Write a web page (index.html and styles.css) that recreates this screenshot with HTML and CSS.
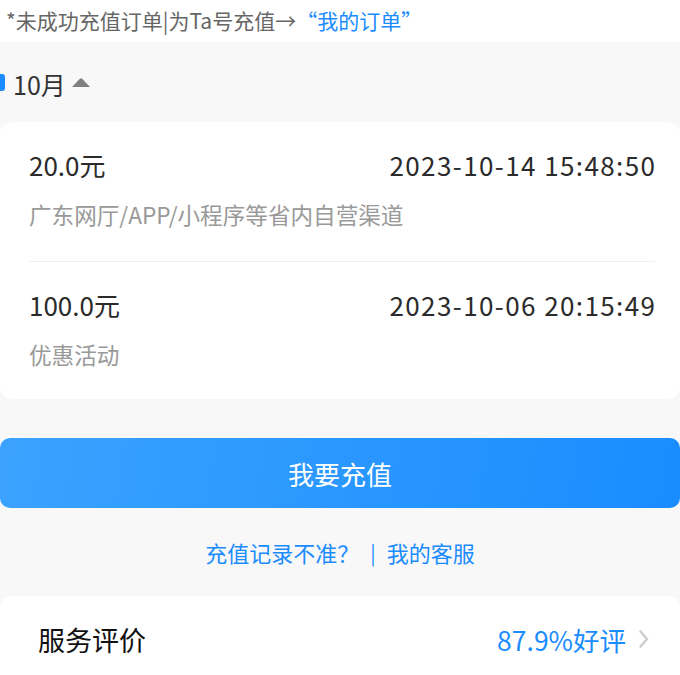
FILE: index.html
```html
<!DOCTYPE html>
<html lang="zh-CN">
<head>
<meta charset="utf-8">
<title>充值记录</title>
<link rel="stylesheet" href="styles.css">
</head>
<body>
<div class="notice">*未成功充值订单|为Ta号充值→<span class="link">“我的订单”</span></div>
<main class="page">
  <div class="month">
    <span class="month-mark"></span>
    <span class="month-label">10月</span>
    <svg class="month-caret" width="20" height="11" viewBox="0 0 20 11"><path d="M1 10 L8.6 2 Q10 0.6 11.4 2 L19 10 Z" fill="#7f7f7f"/></svg>
  </div>
  <section class="card records">
    <div class="record">
      <div class="record-top"><span class="amount">20.0元</span><span class="time">2023-10-14 15:48:50</span></div>
      <div class="channel">广东网厅/APP/小程序等省内自营渠道</div>
    </div>
    <div class="record">
      <div class="record-top"><span class="amount">100.0元</span><span class="time">2023-10-06 20:15:49</span></div>
      <div class="channel">优惠活动</div>
    </div>
  </section>
  <button class="recharge">我要充值</button>
  <div class="help"><span>充值记录不准？</span><span class="sep">|</span><span>我的客服</span></div>
  <section class="card rating">
    <span class="rating-title">服务评价</span>
    <span class="rating-value">87.9%好评
      <svg class="chev" width="12" height="20" viewBox="0 0 12 20"><path d="M2.5 2.5 L9 10 L2.5 17.5" fill="none" stroke="#cfcfcf" stroke-width="2.6" stroke-linecap="round" stroke-linejoin="round"/></svg>
    </span>
  </section>
</main>
</body>
</html>
```
FILE: styles.css
```css
html, body {
  margin: 0;
  padding: 0;
  background: #f8f8f8;
  font-family: "Noto Sans CJK SC", "Noto Sans", sans-serif;
}

.notice {
  background: #fff;
  height: 42px;
  line-height: 40px;
  padding-left: 6px;
  font-size: 21px;
  color: #666;
  white-space: nowrap;
}
.notice .link { color: #1a8cff; }

.page {
  display: flex;
  flex-direction: column;
}

.month {
  height: 80px;
  display: flex;
  align-items: center;
  gap: 7px;
}
.month-mark {
  width: 5px;
  height: 17px;
  background: #1a8cff;
  border-radius: 0 3px 3px 0;
  margin-right: 1px;
}
.month-label {
  font-size: 25px;
  color: #333;
  margin-top: 4px;
}
.month-caret { margin-top: 1px; margin-left: -2px; }

.card {
  background: #fff;
  border-radius: 12px;
}

.records {
  padding: 0 25px 0 29px;
  height: 277px;
  box-sizing: border-box;
}
.record {
  height: 139px;
  box-sizing: border-box;
  padding-top: 24px;
}
.record + .record {
  border-top: 1px solid #f0f0f0;
  padding-top: 24px;
}
.record-top {
  display: flex;
  justify-content: space-between;
  font-size: 26px;
  line-height: 38px;
  color: #2b2b2b;
}
.time { letter-spacing: 1.4px; margin-right: -1.4px; }
.channel {
  margin-top: 16px;
  font-size: 22.6px;
  line-height: 30px;
  color: #999;
}

.recharge {
  margin-top: 39px;
  height: 70px;
  border: none;
  border-radius: 10px;
  background: linear-gradient(100deg, #3ba2ff 0%, #2f9bff 35%, #1a8cff 100%);
  color: #fff;
  font-family: inherit;
  font-size: 26px;
  padding: 0;
}

.help {
  height: 88px;
  display: flex;
  justify-content: center;
  align-items: center;
  gap: 11px;
  font-size: 22px;
  color: #1a8cff;
}
.help .sep { font-size: 20px; }

.rating {
  height: 90px;
  display: flex;
  align-items: center;
  justify-content: space-between;
  padding: 0 30px 0 38px;
  border-radius: 12px 12px 0 0;
}
.rating-title {
  font-size: 27px;
  color: #111;
  margin-top: -4px;
}
.rating-value {
  display: flex;
  align-items: center;
  gap: 12px;
  font-size: 26.5px;
  color: #1a8cff;
  margin-top: -4px;
}
```
